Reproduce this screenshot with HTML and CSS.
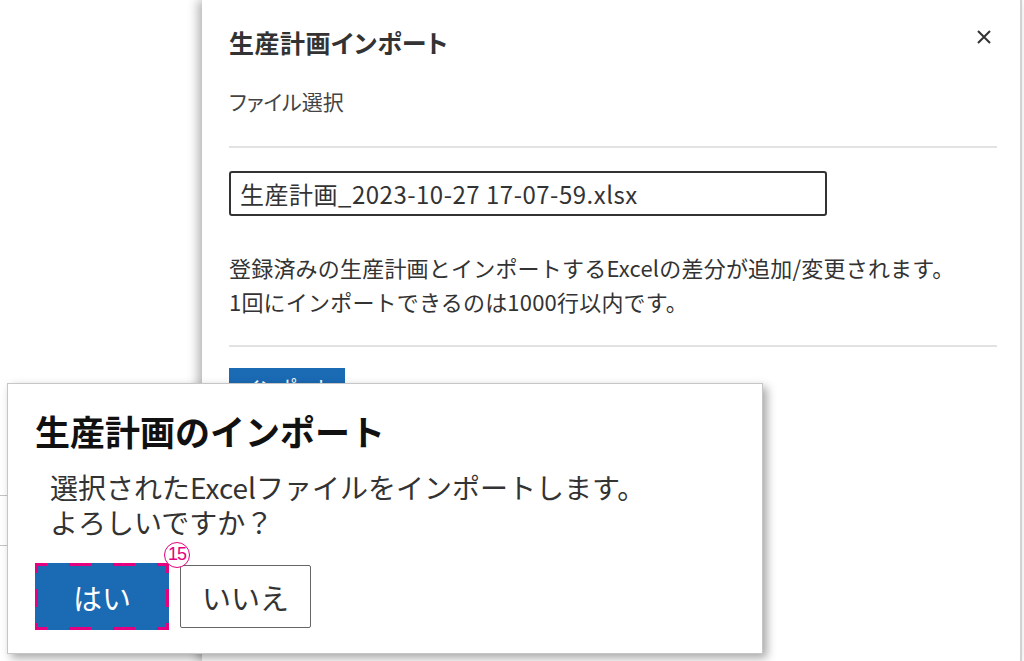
FILE: index.html
```html
<!DOCTYPE html>
<html lang="ja">
<head>
    <meta charset="UTF-8">
    <meta name="viewport" content="width=device-width, initial-scale=1.0">
    <title>生産計画インポート</title>
    <link rel="stylesheet" href="styles.css">
</head>
<body>
    <div class="screen">
        <!-- list behind the side panel -->
        <div class="backdrop">
            <div class="bg-row"></div>
            <div class="bg-row"></div>
        </div>

        <aside class="panel">
            <div class="panel-header">
                <h2 class="panel-title">生産計画インポート</h2>
                <button class="close-btn" aria-label="閉じる">
                    <svg width="16" height="16" viewBox="0 0 16 16">
                        <path d="M2 2 L14 14 M14 2 L2 14" stroke="#333" stroke-width="2" fill="none"/>
                    </svg>
                </button>
            </div>
            <div class="field-label">ファイル選択</div>
            <hr class="divider">
            <div class="file-input">生産計画_2023-10-27 17-07-59.xlsx</div>
            <p class="note">登録済みの生産計画とインポートするExcelの差分が追加/変更されます。<br>1回にインポートできるのは1000行以内です。</p>
            <hr class="divider">
            <button class="import-btn">インポート</button>
        </aside>

        <!-- confirm dialog -->
        <div class="dialog">
            <h1 class="dialog-title">生産計画のインポート</h1>
            <p class="dialog-text">選択されたExcelファイルをインポートします。<br>よろしいですか？</p>
            <div class="dialog-actions">
                <button class="btn btn-yes">はい</button>
                <button class="btn btn-no">いいえ</button>
                <span class="marker">15</span>
            </div>
        </div>
    </div>
</body>
</html>
```

FILE: styles.css
```css
* {
    margin: 0;
    padding: 0;
    box-sizing: border-box;
}

body {
    font-family: "Noto Sans CJK JP", "Noto Sans", sans-serif;
    background: #fff;
    color: #333;
    overflow: hidden;
}

.screen {
    position: relative;
    width: 1024px;
    height: 661px;
    display: flex;
    overflow: hidden;
}

.backdrop {
    width: 202px;
    flex-shrink: 0;
    padding-top: 446px;
}

.bg-row {
    height: 50px;
    border-bottom: 1px solid #c4c4c4;
}

.panel {
    width: 820px;
    height: 661px;
    background: #fff;
    border-right: 2px solid #d2d2d2;
    box-shadow: -4px 0 10px rgba(0, 0, 0, 0.3);
    padding: 26px 23px 0 27px;
}

.panel-header {
    display: flex;
    justify-content: space-between;
    align-items: center;
    height: 32px;
    font-feature-settings: "palt";
}

.panel-title {
    font-size: 25px;
    font-weight: 700;
    color: #333;
    letter-spacing: 0.5px;
}

.close-btn {
    background: none;
    border: none;
    width: 16px;
    height: 16px;
    margin-right: 5px;
    margin-top: -10px;
    display: flex;
}

.field-label {
    font-size: 21px;
    color: #444;
    margin-top: 28px;
    line-height: 30px;
    font-feature-settings: "palt";
}

.divider {
    border: none;
    border-top: 2px solid #e2e2e2;
}

.field-label + .divider {
    margin-top: 30px;
}

.file-input {
    width: 598px;
    height: 45px;
    margin-top: 23px;
    border: 2px solid #333;
    border-radius: 3px;
    padding: 0 9px;
    font-size: 24px;
    line-height: 41px;
    letter-spacing: 0.5px;
    color: #333;
    white-space: nowrap;
}

.note {
    font-size: 22px;
    line-height: 34px;
    letter-spacing: 0.2px;
    color: #333;
    margin-top: 34px;
}

.note + .divider {
    margin-top: 27px;
}

.import-btn {
    margin-top: 21px;
    width: 116px;
    height: 38px;
    background: #1b6ab4;
    border: none;
    color: #fff;
    font-family: inherit;
    font-size: 20px;
    font-feature-settings: "palt";
}

.dialog {
    position: absolute;
    left: 7px;
    top: 383px;
    width: 756px;
    height: 271px;
    background: #fff;
    border: 1px solid #c6c6c6;
    box-shadow: 4px 4px 9px rgba(0, 0, 0, 0.35);
    padding: 24px 0 0 27px;
}

.dialog-title {
    font-size: 35px;
    font-weight: 700;
    color: #111;
    line-height: 46px;
}

.dialog-text {
    font-size: 28px;
    line-height: 35px;
    color: #333;
    margin-left: 15px;
    margin-top: 16px;
}

.dialog-actions {
    position: relative;
    display: flex;
    align-items: center;
    gap: 11px;
    margin-top: 23px;
}

.btn {
    font-family: inherit;
    font-size: 29px;
    height: 63px;
    width: 131px;
    cursor: pointer;
}

/* highlighted button: long magenta dashes drawn on each edge */
.btn-yes {
    height: 67px;
    width: 134px;
    color: #fff;
    border: none;
    background-color: #1b6ab4;
    background-image:
        linear-gradient(90deg, #e4007f 22px, transparent 22px),
        linear-gradient(90deg, #e4007f 22px, transparent 22px),
        linear-gradient(180deg, #e4007f 18px, transparent 18px),
        linear-gradient(180deg, #e4007f 18px, transparent 18px);
    background-size: 44px 3px, 44px 3px, 3px 34px, 3px 34px;
    background-position: -10px top, -10px bottom, left -8px, right -8px;
    background-repeat: repeat-x, repeat-x, repeat-y, repeat-y;
}

.btn-no {
    background: #fff;
    color: #333;
    border: 1px solid #666;
    border-radius: 2px;
}

/* annotation number */
.marker {
    position: absolute;
    left: 129px;
    top: -21px;
    width: 26px;
    height: 26px;
    border: 1.5px solid #e4007f;
    border-radius: 50%;
    color: #e4007f;
    font-family: "Liberation Sans", sans-serif;
    font-size: 18px;
    line-height: 23px;
    text-align: center;
    letter-spacing: -1px;
    background: #fff;
}
```
